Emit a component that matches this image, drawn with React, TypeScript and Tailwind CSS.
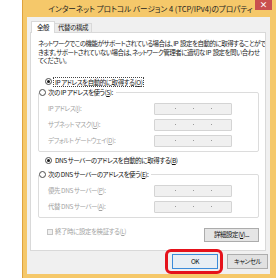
import React from 'react'

const font = "font-['Noto_Sans_CJK_JP',sans-serif] [font-feature-settings:'palt']"
const body = 'text-[6.5px] tracking-[-0.45px]'

function Radio({ checked }: { checked?: boolean }) {
  return (
    <span className="flex h-[7px] w-[7px] shrink-0 items-center justify-center rounded-full border border-[#4d4d4d] bg-white">
      {checked && <span className="h-[3px] w-[3px] rounded-full bg-[#1a1a1a]" />}
    </span>
  )
}

function IpBox() {
  return (
    <div className="flex h-[12px] w-[78px] items-center justify-center gap-[17px] rounded-[1px] border border-[#d4d4d4] bg-[#f0f0f0]">
      <span className="h-px w-px bg-[#9a9a9a]" />
      <span className="h-px w-px bg-[#9a9a9a]" />
      <span className="h-px w-px bg-[#9a9a9a]" />
    </div>
  )
}

function Field({ label, keyChar }: { label: string; keyChar: string }) {
  return (
    <div className="flex h-[12px] items-center">
      <div className={`w-[106px] whitespace-nowrap text-[#a3a3a3] ${body}`}>
        {label}(<span className="underline">{keyChar}</span>):
      </div>
      <IpBox />
    </div>
  )
}

export default function App() {
  return (
    <div className={`flex h-[278px] w-[276px] overflow-hidden bg-white ${font}`}>
      <div className="ml-[22px] flex h-full w-[254px] shrink-0 flex-col border-l border-[#dfa33e] bg-[#f5c86a]">
        {/* Title bar */}
        <div className="relative flex h-[17px] shrink-0 items-center justify-center">
          <span className="whitespace-nowrap pl-[2px] text-[7.6px] text-[#222]">
            インターネット プロトコル バージョン 4 (TCP/IPv4)のプロパティ
          </span>
          <div className="absolute right-[4px] top-0 flex h-[10px] w-[17px] items-center justify-center bg-[#c94f4f] text-[8px] font-bold leading-none text-white">
            ×
          </div>
        </div>

        {/* Client area */}
        <div className="mb-[4px] ml-[4px] mr-[6px] flex min-w-0 flex-1 flex-col bg-[#f0f0f0] pl-[3px] pr-[4px] pt-[4px]">
          {/* Tabs */}
          <div className="flex h-[11px] items-end pl-[1px]">
            <div className={`relative z-10 -mb-px flex h-[12px] w-[24px] items-center justify-center border border-b-0 border-[#d9d9d9] bg-white text-[#111] ${body}`}>
              全般
            </div>
            <div className={`flex h-[9px] w-[37px] items-center justify-center border border-b-0 border-l-0 border-[#d9d9d9] bg-[#ececec] text-[#222] ${body}`}>
              代替の構成
            </div>
          </div>

          {/* Panel */}
          <div className="flex h-[219px] min-w-0 flex-col overflow-hidden border border-[#d9d9d9] bg-white pl-[7px] pt-[6px]">
            <p className="whitespace-nowrap text-[6.5px] leading-[8.5px] tracking-[-0.52px] text-[#222]">
              ネットワークでこの機能がサポートされている場合は、IP&nbsp; 設定を自動的に取得することがで
              <br />
              きます。サポートされていない場合は、ネットワーク管理者に適切な IP&nbsp; 設定を問い合わせ
              <br />
              てください。
            </p>

            <div className="ml-[7px] mt-[12px] flex h-[10px] items-center gap-[2px]">
              <Radio checked />
              <span className={`whitespace-nowrap px-px leading-[8px] text-[#111] outline-1 outline-dotted outline-[#444] ${body}`}>
                IP アドレスを自動的に取得する(<span className="underline">O</span>)
              </span>
            </div>

            <fieldset className="mt-[1px] w-[221px] rounded-[2px] border border-[#dcdcdc] px-0 pb-[4px]">
              <legend className="flex h-[10px] items-center gap-[2px] pr-[3px]">
                <Radio />
                <span className={`whitespace-nowrap text-[#111] ${body}`}>
                  次の IP アドレスを使う(<span className="underline">S</span>):
                </span>
              </legend>
              <div className="mt-[5px] flex flex-col gap-[4px] pl-[9px]">
                <Field label="IP アドレス" keyChar="I" />
                <Field label="サブネット マスク" keyChar="U" />
                <Field label="デフォルト ゲートウェイ" keyChar="D" />
              </div>
            </fieldset>

            <div className="ml-[7px] mt-[4px] flex h-[10px] items-center gap-[2px]">
              <Radio checked />
              <span className={`whitespace-nowrap px-px text-[#111] ${body}`}>
                DNS サーバーのアドレスを自動的に取得する(<span className="underline">B</span>)
              </span>
            </div>

            <fieldset className="mt-[4px] w-[221px] rounded-[2px] border border-[#dcdcdc] px-0 pb-[4px]">
              <legend className="flex h-[10px] items-center gap-[2px] pr-[3px]">
                <Radio />
                <span className={`whitespace-nowrap text-[#111] ${body}`}>
                  次の DNS サーバーのアドレスを使う(<span className="underline">E</span>):
                </span>
              </legend>
              <div className="mt-[5px] flex flex-col gap-[4px] pl-[9px]">
                <Field label="優先 DNS サーバー" keyChar="P" />
                <Field label="代替 DNS サーバー" keyChar="A" />
              </div>
            </fieldset>

            <div className="mt-[9px] flex w-[221px] items-start justify-between pl-[9px]">
              <div className="flex h-[10px] items-center gap-[2px]">
                <span className="h-[6px] w-[6px] border border-[#c4c4c4] bg-[#f0f0f0]" />
                <span className={`whitespace-nowrap text-[#a3a3a3] ${body}`}>
                  終了時に設定を検証する(<span className="underline">L</span>)
                </span>
              </div>
              <div className={`mt-px flex h-[14px] w-[55px] items-center justify-center border border-[#acacac] bg-[#e5e5e5] text-[#111] ${body}`}>
                詳細設定(<span className="underline">V</span>)...
              </div>
            </div>
          </div>

          {/* Dialog buttons */}
          <div className="-mr-[2px] mt-[3px] flex justify-end gap-[9px]">
            <div className="relative">
              <div className={`flex h-[15px] w-[46px] items-center justify-center border border-[#3c8bd9] bg-[#e8eef4] text-[#111] ${body}`}>
                OK
              </div>
              <div className="absolute -bottom-[5px] -left-[7px] -right-[5px] -top-[5px] rounded-[6px] border-[3px] border-[#e5121b]" />
            </div>
            <div className={`flex h-[15px] w-[41px] items-center justify-center border border-[#adadad] bg-[#e1e1e1] text-[#111] ${body}`}>
              キャンセル
            </div>
          </div>
        </div>
      </div>
    </div>
  )
}
